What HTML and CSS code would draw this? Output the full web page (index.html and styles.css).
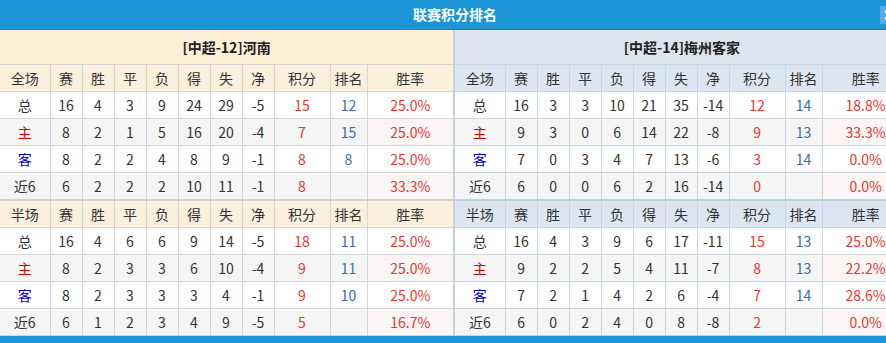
FILE: index.html
```html
<!DOCTYPE html>
<html lang="zh-CN">
<head>
    <meta charset="UTF-8">
    <title>联赛积分排名</title>
    <link rel="stylesheet" href="styles.css">
</head>
<body>
<div class="panel">
    <div class="panel-title">
        联赛积分排名
        <span class="close">
            <svg width="18" height="18" viewBox="0 0 18 18"><path d="M5 5 L13 13 M13 5 L5 13" stroke="#fff" stroke-width="2.2" fill="none"/></svg>
        </span>
    </div>
    <div class="tables">
        <table class="rank home">
            <colgroup>
                <col class="w-type"><col class="w-n"><col class="w-n"><col class="w-n"><col class="w-n">
                <col class="w-n"><col class="w-n"><col class="w-n"><col class="w-pts"><col class="w-rank"><col class="w-rate">
            </colgroup>
            <tr class="team"><td colspan="11">[中超-12]河南</td></tr>
            <tr class="head"><td>全场</td><td>赛</td><td>胜</td><td>平</td><td>负</td><td>得</td><td>失</td><td>净</td><td>积分</td><td>排名</td><td>胜率</td></tr>
            <tr><td>总</td><td>16</td><td>4</td><td>3</td><td>9</td><td>24</td><td>29</td><td>-5</td><td class="pts">15</td><td class="pos">12</td><td class="rate">25.0%</td></tr>
            <tr class="alt"><td class="h">主</td><td>8</td><td>2</td><td>1</td><td>5</td><td>16</td><td>20</td><td>-4</td><td class="pts">7</td><td class="pos">15</td><td class="rate">25.0%</td></tr>
            <tr><td class="a">客</td><td>8</td><td>2</td><td>2</td><td>4</td><td>8</td><td>9</td><td>-1</td><td class="pts">8</td><td class="pos">8</td><td class="rate">25.0%</td></tr>
            <tr class="alt"><td>近6</td><td>6</td><td>2</td><td>2</td><td>2</td><td>10</td><td>11</td><td>-1</td><td class="pts">8</td><td class="pos"></td><td class="rate">33.3%</td></tr>
            <tr class="head split"><td>半场</td><td>赛</td><td>胜</td><td>平</td><td>负</td><td>得</td><td>失</td><td>净</td><td>积分</td><td>排名</td><td>胜率</td></tr>
            <tr><td>总</td><td>16</td><td>4</td><td>6</td><td>6</td><td>9</td><td>14</td><td>-5</td><td class="pts">18</td><td class="pos">11</td><td class="rate">25.0%</td></tr>
            <tr class="alt"><td class="h">主</td><td>8</td><td>2</td><td>3</td><td>3</td><td>6</td><td>10</td><td>-4</td><td class="pts">9</td><td class="pos">11</td><td class="rate">25.0%</td></tr>
            <tr><td class="a">客</td><td>8</td><td>2</td><td>3</td><td>3</td><td>3</td><td>4</td><td>-1</td><td class="pts">9</td><td class="pos">10</td><td class="rate">25.0%</td></tr>
            <tr class="alt"><td>近6</td><td>6</td><td>1</td><td>2</td><td>3</td><td>4</td><td>9</td><td>-5</td><td class="pts">5</td><td class="pos"></td><td class="rate">16.7%</td></tr>
        </table>
        <table class="rank away">
            <colgroup>
                <col class="w-type"><col class="w-n"><col class="w-n"><col class="w-n"><col class="w-n">
                <col class="w-n"><col class="w-n"><col class="w-n"><col class="w-pts"><col class="w-rank"><col class="w-rate">
            </colgroup>
            <tr class="team"><td colspan="11">[中超-14]梅州客家</td></tr>
            <tr class="head"><td>全场</td><td>赛</td><td>胜</td><td>平</td><td>负</td><td>得</td><td>失</td><td>净</td><td>积分</td><td>排名</td><td>胜率</td></tr>
            <tr><td>总</td><td>16</td><td>3</td><td>3</td><td>10</td><td>21</td><td>35</td><td>-14</td><td class="pts">12</td><td class="pos">14</td><td class="rate">18.8%</td></tr>
            <tr class="alt"><td class="h">主</td><td>9</td><td>3</td><td>0</td><td>6</td><td>14</td><td>22</td><td>-8</td><td class="pts">9</td><td class="pos">13</td><td class="rate">33.3%</td></tr>
            <tr><td class="a">客</td><td>7</td><td>0</td><td>3</td><td>4</td><td>7</td><td>13</td><td>-6</td><td class="pts">3</td><td class="pos">14</td><td class="rate">0.0%</td></tr>
            <tr class="alt"><td>近6</td><td>6</td><td>0</td><td>0</td><td>6</td><td>2</td><td>16</td><td>-14</td><td class="pts">0</td><td class="pos"></td><td class="rate">0.0%</td></tr>
            <tr class="head split"><td>半场</td><td>赛</td><td>胜</td><td>平</td><td>负</td><td>得</td><td>失</td><td>净</td><td>积分</td><td>排名</td><td>胜率</td></tr>
            <tr><td>总</td><td>16</td><td>4</td><td>3</td><td>9</td><td>6</td><td>17</td><td>-11</td><td class="pts">15</td><td class="pos">13</td><td class="rate">25.0%</td></tr>
            <tr class="alt"><td class="h">主</td><td>9</td><td>2</td><td>2</td><td>5</td><td>4</td><td>11</td><td>-7</td><td class="pts">8</td><td class="pos">13</td><td class="rate">22.2%</td></tr>
            <tr><td class="a">客</td><td>7</td><td>2</td><td>1</td><td>4</td><td>2</td><td>6</td><td>-4</td><td class="pts">7</td><td class="pos">14</td><td class="rate">28.6%</td></tr>
            <tr class="alt"><td>近6</td><td>6</td><td>0</td><td>2</td><td>4</td><td>0</td><td>8</td><td>-8</td><td class="pts">2</td><td class="pos"></td><td class="rate">0.0%</td></tr>
        </table>
    </div>
    <div class="next-bar"></div>
</div>
</body>
</html>
```

FILE: styles.css
```css
body {
    margin: 0;
    padding: 0;
    overflow: hidden;
    font-family: "Noto Sans CJK SC", "Noto Sans", sans-serif;
    font-size: 14px;
    color: #333;
    background-color: #fff;
}

.panel {
    width: 910px;
}

.panel-title {
    position: relative;
    height: 29px;
    line-height: 29px;
    background-color: #1b95d5;
    border-bottom: 1px solid #1584c0;
    color: #fff;
    font-weight: bold;
    text-align: center;
    font-size: 14px;
}

.close {
    position: absolute;
    left: 880px;
    top: 6px;
    width: 18px;
    height: 18px;
    background-color: #5aa9e8;
}

.close svg {
    display: block;
}

.tables {
    display: flex;
}

.rank {
    width: 454px;
    border-collapse: collapse;
    table-layout: fixed;
}

.rank.home {
    border-right: 2px solid #c8d2dc;
}

.w-type { width: 50px; }
.w-n { width: 32px; }
.w-pts { width: 56px; }
.w-rank { width: 37px; }
.w-rate { width: 87px; }

.rank td {
    height: 26px;
    padding: 0;
    text-align: center;
    line-height: 26px;
    white-space: nowrap;
    border: 1px solid #d6d6d6;
}

.rank tr:first-child td {
    border-top: none;
}

.rank td:first-child {
    border-left: none;
}

.rank .team td {
    height: 34px;
    font-weight: bold;
    color: #222;
}

.home .team td {
    background-color: #fcefd5;
}

.away .team td {
    background-color: #dce5ed;
}

.home .head td {
    background-color: #fbf0dc;
}

.away .head td {
    background-color: #dde6f0;
}

.away td {
    border-color: #c7d6e4;
}

.rank .split td {
    border-top: 2px solid #d2d2d2;
}

.away .split td {
    border-top-color: #bcd0e4;
}

.rank .alt td {
    background-color: #f5f5f5;
}

.rank .alt td.rate {
    background-color: #fbf6f5;
}

.h {
    color: #cc0000;
}

.a {
    color: #0000bb;
}

.pts {
    color: #e8392f;
}

.pos {
    color: #3c6ab2;
}

.rate {
    color: #e8392f;
}

.next-bar {
    height: 8px;
    background-color: #1b95d5;
}
```
